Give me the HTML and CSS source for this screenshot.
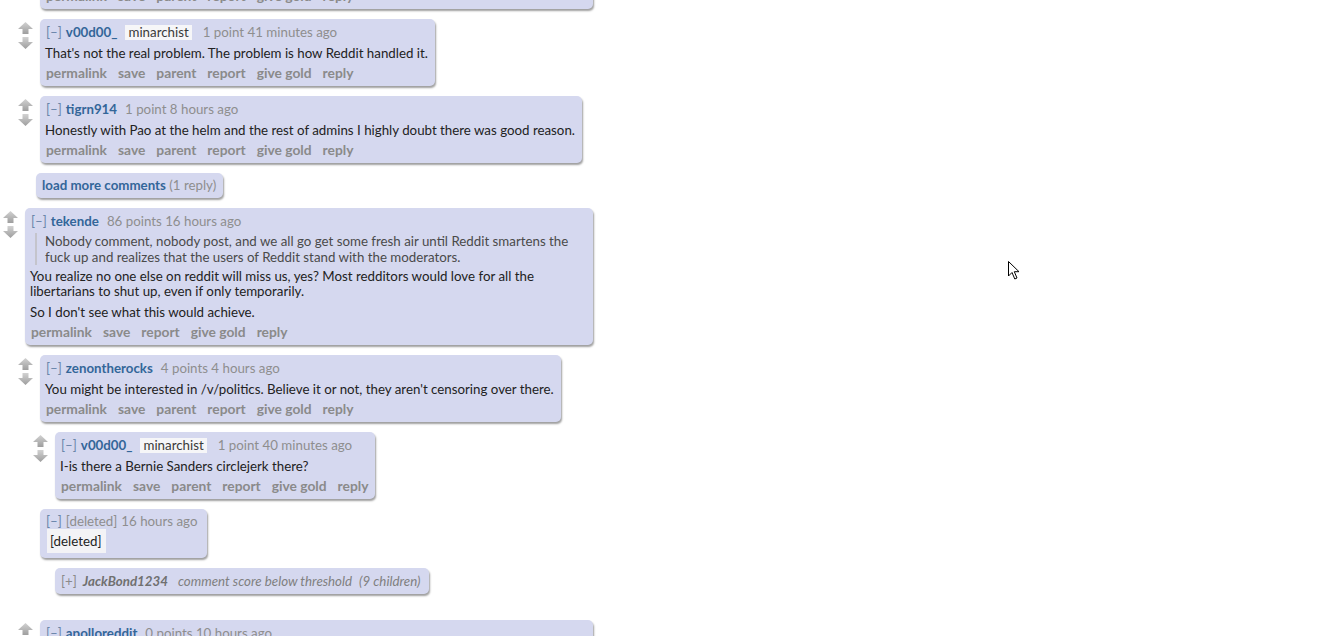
FILE: index.html
```html
<!DOCTYPE html>
<html>
<head>
<meta charset="utf-8">
<link rel="stylesheet" href="styles.css">
</head>
<body>
<svg class="defs" width="0" height="0" aria-hidden="true">
  <defs>
    <linearGradient id="ag" x1="0" y1="0" x2="0" y2="1">
      <stop offset="0" stop-color="#d2d2d2"/>
      <stop offset="1" stop-color="#9e9e9e"/>
    </linearGradient>
    <symbol id="up" viewBox="0 0 15 12"><polygon points="7.5,0 15,7 10.5,7 10.5,12 4.5,12 4.5,7 0,7" fill="url(#ag)"/></symbol>
    <symbol id="down" viewBox="0 0 15 12"><polygon points="7.5,12 15,5 10.5,5 10.5,0 4.5,0 4.5,5 0,5" fill="url(#ag)"/></symbol>
  </defs>
</svg>

<div class="comments">
  <div class="row d1 first">
    <div class="mid"></div>
    <div class="card wide">
      <div class="actions"><span>permalink</span><span>save</span><span>parent</span><span>report</span><span>give gold</span><span>reply</span></div>
    </div>
  </div>

  <div class="row d1">
    <div class="mid"><svg class="arrow"><use href="#up"/></svg><svg class="arrow"><use href="#down"/></svg></div>
    <div class="card">
      <div class="tagline"><span class="expand">[–]</span><span class="author">v00d00_</span><span class="flair">minarchist</span><span class="meta">1 point 41 minutes ago</span></div>
      <div class="md"><p>That's not the real problem. The problem is how Reddit handled it.</p></div>
      <div class="actions"><span>permalink</span><span>save</span><span>parent</span><span>report</span><span>give gold</span><span>reply</span></div>
    </div>
  </div>

  <div class="row d1">
    <div class="mid"><svg class="arrow"><use href="#up"/></svg><svg class="arrow"><use href="#down"/></svg></div>
    <div class="card">
      <div class="tagline"><span class="expand">[–]</span><span class="author">tigrn914</span><span class="meta">1 point 8 hours ago</span></div>
      <div class="md"><p>Honestly with Pao at the helm and the rest of admins I highly doubt there was good reason.</p></div>
      <div class="actions"><span>permalink</span><span>save</span><span>parent</span><span>report</span><span>give gold</span><span>reply</span></div>
    </div>
  </div>

  <div class="row more">
    <div class="card morecard"><span class="morelink">load more comments</span> <span class="count">(1 reply)</span></div>
  </div>

  <div class="row d0">
    <div class="mid"><svg class="arrow"><use href="#up"/></svg><svg class="arrow"><use href="#down"/></svg></div>
    <div class="card">
      <div class="tagline"><span class="expand">[–]</span><span class="author">tekende</span><span class="meta">86 points 16 hours ago</span></div>
      <div class="md">
        <blockquote><p>Nobody comment, nobody post, and we all go get some fresh air until Reddit smartens the fuck up and realizes that the users of Reddit stand with the moderators.</p></blockquote>
        <p class="two">You realize no one else on reddit will miss us, yes? Most redditors would love for all the libertarians to shut up, even if only temporarily.</p>
        <p>So I don't see what this would achieve.</p>
      </div>
      <div class="actions"><span>permalink</span><span>save</span><span>report</span><span>give gold</span><span>reply</span></div>
    </div>
  </div>

  <div class="row d1">
    <div class="mid"><svg class="arrow"><use href="#up"/></svg><svg class="arrow"><use href="#down"/></svg></div>
    <div class="card">
      <div class="tagline"><span class="expand">[–]</span><span class="author">zenontherocks</span><span class="meta">4 points 4 hours ago</span></div>
      <div class="md"><p>You might be interested in /v/politics. Believe it or not, they aren't censoring over there.</p></div>
      <div class="actions"><span>permalink</span><span>save</span><span>parent</span><span>report</span><span>give gold</span><span>reply</span></div>
    </div>
  </div>

  <div class="row d2">
    <div class="mid"><svg class="arrow"><use href="#up"/></svg><svg class="arrow"><use href="#down"/></svg></div>
    <div class="card">
      <div class="tagline"><span class="expand">[–]</span><span class="author">v00d00_</span><span class="flair">minarchist</span><span class="meta">1 point 40 minutes ago</span></div>
      <div class="md"><p>I-is there a Bernie Sanders circlejerk there?</p></div>
      <div class="actions"><span>permalink</span><span>save</span><span>parent</span><span>report</span><span>give gold</span><span>reply</span></div>
    </div>
  </div>

  <div class="row d1">
    <div class="mid"></div>
    <div class="card deleted">
      <div class="tagline"><span class="expand">[–]</span><span class="gone">[deleted]</span><span class="meta">16 hours ago</span></div>
      <div class="md"><span class="delbody">[deleted]</span></div>
    </div>
  </div>

  <div class="row d2">
    <div class="mid"></div>
    <div class="card collapsed">
      <span class="plus">[+]</span><span class="cauthor">JackBond1234</span><span class="note">comment score below threshold</span><span class="note kids">(9 children)</span>
    </div>
  </div>

  <div class="row d1 newthread">
    <div class="mid"><svg class="arrow"><use href="#up"/></svg><svg class="arrow"><use href="#down"/></svg></div>
    <div class="card wide">
      <div class="tagline"><span class="expand">[–]</span><span class="author">apolloreddit</span><span class="meta">0 points 10 hours ago</span></div>
      <div class="actions"><span>permalink</span><span>save</span><span>parent</span><span>report</span><span>give gold</span><span>reply</span></div>
    </div>
  </div>
</div>

<svg class="cursor" width="13" height="20" viewBox="0 0 13 20" aria-hidden="true">
  <polygon points="0.5,0.5 0.5,15 4,11.5 6.8,18 9,17 6.3,10.7 11,10.7" fill="#fff" stroke="#000" stroke-width="1" stroke-linejoin="miter"/>
</svg>
</body>
</html>
```

FILE: styles.css
```css
html, body {
  margin: 0;
  padding: 0;
  background: #ffffff;
}

body {
  font-family: Lato, "Noto Sans", sans-serif;
  font-size: 13.3px;
  color: #222222;
  height: 636px;
  overflow: hidden;
  position: relative;
}

.defs {
  display: block;
  width: 0;
  height: 0;
  overflow: hidden;
}

.comments {
  width: 593px;
  display: flex;
  flex-direction: column;
  margin-top: -21px;
}

.row {
  display: flex;
  align-items: flex-start;
  margin-bottom: 10px;
}

.d0 { padding-left: 3px; }
.d1 { padding-left: 18px; }
.d2 { padding-left: 33px; }
.more { padding-left: 36px; }
.newthread { margin-top: 16px; }

.mid {
  flex: none;
  width: 15px;
  margin-right: 7px;
  padding-top: 3px;
  display: flex;
  flex-direction: column;
  gap: 3px;
}

.arrow {
  display: block;
  width: 15px;
  height: 12px;
}

.card {
  flex: 0 1 auto;
  min-width: 0;
  background: #d5d8ef;
  border-radius: 5px;
  box-shadow: 1px 2px 2px rgba(0, 0, 0, 0.38);
  padding: 5px 7px 5px 5px;
}

.wide {
  flex: 1 1 auto;
}

.tagline {
  display: flex;
  align-items: baseline;
  line-height: 16px;
  white-space: nowrap;
  padding-left: 1px;
}

.expand {
  color: #6a86aa;
  margin-right: 4px;
}

.author {
  color: #336699;
  font-weight: bold;
  margin-right: 8px;
}

.flair {
  background: #f6f6f8;
  color: #3a3a3a;
  padding: 0 3px;
  line-height: 15px;
  margin-right: 11px;
}

.meta {
  color: #8e8e8e;
}

.md p {
  margin: 5px 0 0;
  line-height: 16px;
}

.md p.two {
  line-height: 15px;
}

.md blockquote {
  margin: 4px 0 0 5px;
  padding-left: 8px;
  border-left: 2px solid #c4c4cc;
  color: #4a4a4a;
}

.md blockquote p {
  margin: 0;
}

.md blockquote + p {
  margin-top: 4px;
}

.actions {
  display: flex;
  gap: 11px;
  margin-top: 4px;
  line-height: 16px;
  font-size: 13.8px;
  font-weight: bold;
  color: #8a8a8a;
  padding-left: 1px;
  white-space: nowrap;
}

.morecard {
  padding: 4px 7px 5px 6px;
  line-height: 16px;
  white-space: nowrap;
}

.morelink {
  color: #336699;
  font-weight: bold;
}

.count {
  color: #8e8e8e;
}

.deleted {
  padding: 4px 10px 5px 5px;
}

.gone {
  color: #8e8e8e;
  margin-right: 4px;
}

.delbody {
  display: inline-block;
  background: #f3f3f6;
  line-height: 16px;
  padding: 4px 5px 4px 3px;
  margin-left: 2px;
  color: #222222;
}

.collapsed {
  display: flex;
  align-items: baseline;
  white-space: nowrap;
  line-height: 16px;
  padding: 5px 8px 5px 6px;
  color: #888888;
}

.plus {
  color: #8a8a8a;
  margin-right: 6px;
}

.cauthor {
  font-weight: bold;
  font-style: italic;
  color: #707070;
  margin-right: 10px;
}

.note {
  font-style: italic;
  color: #808080;
}

.kids {
  margin-left: 7px;
}

.cursor {
  position: absolute;
  left: 1008px;
  top: 261px;
}
```
